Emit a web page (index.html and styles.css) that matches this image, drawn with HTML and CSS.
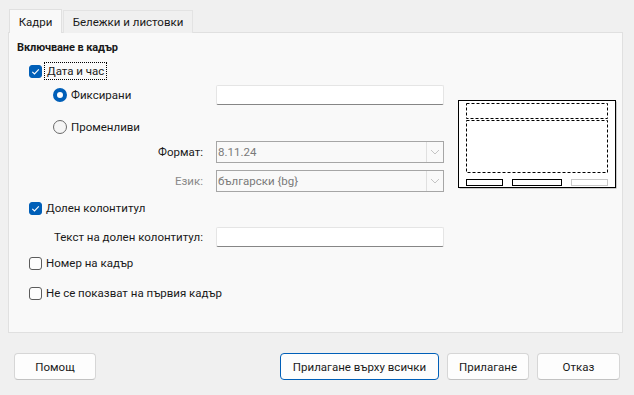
FILE: index.html
```html
<!DOCTYPE html>
<html lang="bg">
<head>
<meta charset="utf-8">
<title>Горен и долен колонтитул</title>
<link rel="stylesheet" href="styles.css">
</head>
<body>
<div class="dialog">
  <div class="tabs">
    <div class="tab active">Кадри</div>
    <div class="tab">Бележки и листовки</div>
  </div>
  <div class="panel">
    <div class="form">
      <div class="row heading-row"><span class="heading">Включване в кадър</span></div>
      <div class="row r-date">
        <label class="check"><span class="box checked"><svg viewBox="0 0 13 13" width="13" height="13"><path d="M3.3 6.8 L5.5 9 L9.8 4.4" fill="none" stroke="#fff" stroke-width="1.1"/></svg></span><span class="focus">Дата и час</span></label>
      </div>
      <div class="row r-fixed">
        <label class="radio"><span class="dot checked"></span><span>Фиксирани</span></label>
        <div class="input"></div>
      </div>
      <div class="row r-var">
        <label class="radio"><span class="dot"></span><span>Променливи</span></label>
      </div>
      <div class="row r-format">
        <span class="lbl">Формат:</span>
        <div class="select"><span>8.11.24</span><span class="drop"><svg viewBox="0 0 10 6" width="10" height="6"><path d="M1 1 L5 5 L9 1" fill="none" stroke="#c4c4c4" stroke-width="1"/></svg></span></div>
      </div>
      <div class="row r-lang">
        <span class="lbl dim">Език:</span>
        <div class="select"><span>български {bg}</span><span class="drop"><svg viewBox="0 0 10 6" width="10" height="6"><path d="M1 1 L5 5 L9 1" fill="none" stroke="#c4c4c4" stroke-width="1"/></svg></span></div>
      </div>
      <div class="row r-footer">
        <label class="check"><span class="box checked"><svg viewBox="0 0 13 13" width="13" height="13"><path d="M3.3 6.8 L5.5 9 L9.8 4.4" fill="none" stroke="#fff" stroke-width="1.1"/></svg></span><span>Долен колонтитул</span></label>
      </div>
      <div class="row r-text">
        <span class="lbl">Текст на долен колонтитул:</span>
        <div class="input"></div>
      </div>
      <div class="row r-num">
        <label class="check"><span class="box"></span><span>Номер на кадър</span></label>
      </div>
      <div class="row r-first">
        <label class="check"><span class="box"></span><span>Не се показват на първия кадър</span></label>
      </div>
    </div>
    <div class="preview">
      <svg width="160" height="90" viewBox="0 0 160 90">
        <rect x="1.5" y="1.5" width="157" height="87" fill="#9a9a9a"/>
        <rect x="0.5" y="0.5" width="157" height="87" fill="#fff" stroke="#000" stroke-width="1"/>
        <rect x="8.5" y="3.5" width="141" height="15" fill="none" stroke="#000" stroke-width="1" stroke-dasharray="3 2"/>
        <rect x="8.5" y="20.5" width="141" height="52" fill="none" stroke="#000" stroke-width="1" stroke-dasharray="3 2"/>
        <rect x="8.5" y="79.5" width="36" height="6" fill="none" stroke="#000" stroke-width="1"/>
        <rect x="54.5" y="79.5" width="49" height="6" fill="none" stroke="#000" stroke-width="1"/>
        <rect x="113.5" y="79.5" width="36" height="6" fill="none" stroke="#c8c8c8" stroke-width="1"/>
      </svg>
    </div>
  </div>
  <div class="buttons">
    <button class="btn help">Помощ</button>
    <div class="spacer"></div>
    <button class="btn primary">Прилагане върху всички</button>
    <button class="btn apply">Прилагане</button>
    <button class="btn cancel">Отказ</button>
  </div>
</div>
</body>
</html>
```

FILE: styles.css
```css
* { box-sizing: border-box; }
html, body {
  margin: 0;
  padding: 0;
  background: #f0f0f0;
}
body {
  width: 634px;
  height: 395px;
  overflow: hidden;
  font-family: Roboto, "Noto Sans", "DejaVu Sans", sans-serif;
  font-size: 11.5px;
  color: #1a1a1a;
}
.dialog {
  display: flex;
  flex-direction: column;
  padding: 9px 11px 0 8px;
}
.tabs {
  display: flex;
  align-items: flex-end;
  padding-left: 1px;
  height: 24px;
  position: relative;
  z-index: 1;
  margin-bottom: -1px;
}
.tab {
  height: 23px;
  padding: 0 10px;
  display: flex;
  align-items: center;
  justify-content: center;
  border: 1px solid #e3e3e3;
  border-bottom: none;
  background: #f0f0f0;
  color: #1a1a1a;
  margin-right: 1px;
  white-space: nowrap;
}
.tab.active {
  height: 24px;
  width: 53px;
  padding: 0;
  background: #f9f9f9;
  border-color: #e0e0e0;
}
.tab:not(.active) { width: 130px; padding: 0; }
.panel {
  height: 301px;
  background: #f9f9f9;
  border: 1px solid #e0e0e0;
  display: flex;
  align-items: flex-start;
  padding: 5px 0 0 8px;
}
.form {
  display: flex;
  flex-direction: column;
  width: 427px;
}
.row {
  display: grid;
  grid-template-columns: 199px 228px;
  align-items: center;
  height: 18px;
}
.heading-row { height: 18px; }
.heading { font-weight: bold; font-size: 11px; letter-spacing: -0.1px; grid-column: 1 / 3; }
.r-date { margin-top: 6px; }
.r-fixed { margin-top: 5px; height: 20px; }
.r-var { margin-top: 12px; height: 20px; }
.r-format { margin-top: 4px; height: 22px; }
.r-lang { margin-top: 7px; height: 22px; }
.r-footer { margin-top: 7px; }
.r-text { margin-top: 10px; height: 20px; }
.r-num { margin-top: 7px; }
.r-first { margin-top: 12px; }

.check {
  display: flex;
  align-items: center;
  gap: 4px;
  padding-left: 12px;
  grid-column: 1 / 3;
  white-space: nowrap;
}
.radio {
  display: flex;
  align-items: center;
  gap: 4px;
  padding-left: 36px;
  white-space: nowrap;
}
.box {
  width: 13px;
  height: 13px;
  border: 1px solid #5c5c5c;
  border-radius: 3px;
  background: #fdfdfd;
  display: flex;
  flex: none;
}
.box.checked {
  background: #005fb8;
  border-color: #005fb8;
  position: relative;
}
.box.checked svg { position: absolute; left: -1px; top: -1px; }
.focus {
  outline: 1px dotted #000;
  outline-offset: 1px;
  padding: 0 1px;
}
.dot {
  width: 14px;
  height: 14px;
  border-radius: 50%;
  border: 1px solid #6a6a6a;
  background: #f5f5f5;
  flex: none;
}
.dot.checked {
  border: 4px solid #005fb8;
  background: #fff;
}
.lbl {
  text-align: right;
  padding-right: 13px;
  white-space: nowrap;
}
.lbl.dim { color: #8a8a8a; }
.input {
  height: 20px;
  background: #fff;
  border: 1px solid #e5e5e5;
  border-bottom-color: #868686;
  border-radius: 2px;
}
.select {
  height: 22px;
  border: 1px solid #a6a6a6;
  background: #f9f9f9;
  color: #7a7a7a;
  display: flex;
  align-items: center;
  justify-content: space-between;
  padding-left: 1px;
}
.drop {
  width: 17px;
  height: 20px;
  border-left: 1px solid #e0e0e0;
  display: flex;
  align-items: center;
  justify-content: center;
}
.preview {
  margin-left: 14px;
  margin-top: 62px;
  width: 160px;
  height: 90px;
}
.preview svg { display: block; }
.buttons {
  display: flex;
  align-items: center;
  margin-top: 20px;
  padding-left: 6px;
  height: 27px;
}
.spacer { flex: 1; }
.btn {
  height: 27px;
  font: inherit;
  color: #1a1a1a;
  background: #fdfdfd;
  border: 1px solid #d6d6d6;
  border-bottom-color: #c2c2c2;
  border-radius: 4px;
  padding: 0;
}
.help { width: 82px; }
.primary { width: 159px; border-color: #005fb8; margin-right: 8px; }
.apply { width: 82px; margin-right: 8px; }
.cancel { width: 83px; margin-right: 3px; }
```
